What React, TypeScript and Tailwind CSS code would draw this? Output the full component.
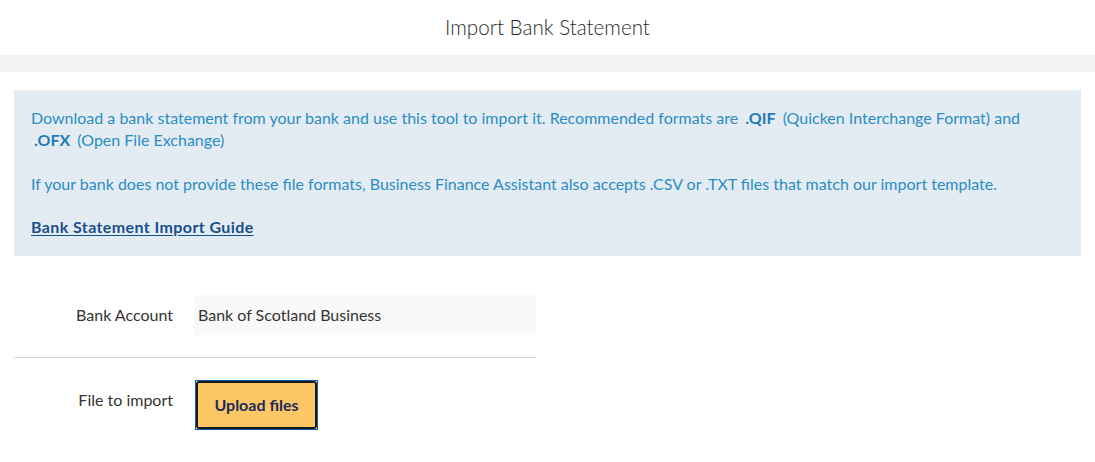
export default function App() {
  return (
    <div className="min-h-[462px] bg-white font-['Lato','Open_Sans',sans-serif] text-[#333]">
      {/* header */}
      <div className="h-[55px] flex items-center justify-center">
        <h1 className="text-[20.6px] font-light text-[#2a2a2a]">Import Bank Statement</h1>
      </div>
      <div className="h-[17px] bg-[#f2f2f2]" />

      <div className="px-[14px] pt-[18px]">
        {/* info box */}
        <div className="bg-[#e4ecf3] h-[166px] pl-[17px] pr-[40px] pt-[17px] text-[16px] leading-[22px] text-[#2b8cc4]">
          <p>
            Download a bank statement from your bank and use this tool to import it. Recommended formats are{' '}
            <b className="font-bold text-[#1f7bb8] mx-[3px]">.QIF</b> (Quicken Interchange Format) and{' '}
            <b className="font-bold text-[#1f7bb8] mx-[3px]">.OFX</b> (Open File Exchange)
          </p>
          <p className="mt-[22px]">
            If your bank does not provide these file formats, Business Finance Assistant also accepts .CSV or .TXT files that match our import template.
          </p>
          <p className="mt-[21px]">
            <a href="#" className="font-bold tracking-[0.4px] text-[#1a4f8d] underline underline-offset-2">Bank Statement Import Guide</a>
          </p>
        </div>

        {/* form */}
        <div className="w-[522px] mt-[39px]">
          <div className="flex items-center pb-[22px] border-b border-[#d9d9d9]">
            <div className="w-[159px] text-right text-[16px] text-[#333]">Bank Account</div>
            <div className="ml-[21px] flex-1 h-[40px] bg-[#f9f9f9] flex items-center pl-[4px] text-[16px] text-[#333]">
              Bank of Scotland Business
            </div>
          </div>
          <div className="flex items-start pt-[22px]">
            <div className="w-[159px] text-right text-[16px] text-[#333] pt-[8px]">File to import</div>
            <div className="ml-[22px] border border-[#0b5aa5]">
              <button className="w-[121px] h-[48px] rounded-[3px] border-2 border-[#1a1a1a] bg-[#fdc766] text-[16px] font-bold text-[#1d2a5c]">
                Upload files
              </button>
            </div>
          </div>
        </div>
      </div>
    </div>
  )
}
